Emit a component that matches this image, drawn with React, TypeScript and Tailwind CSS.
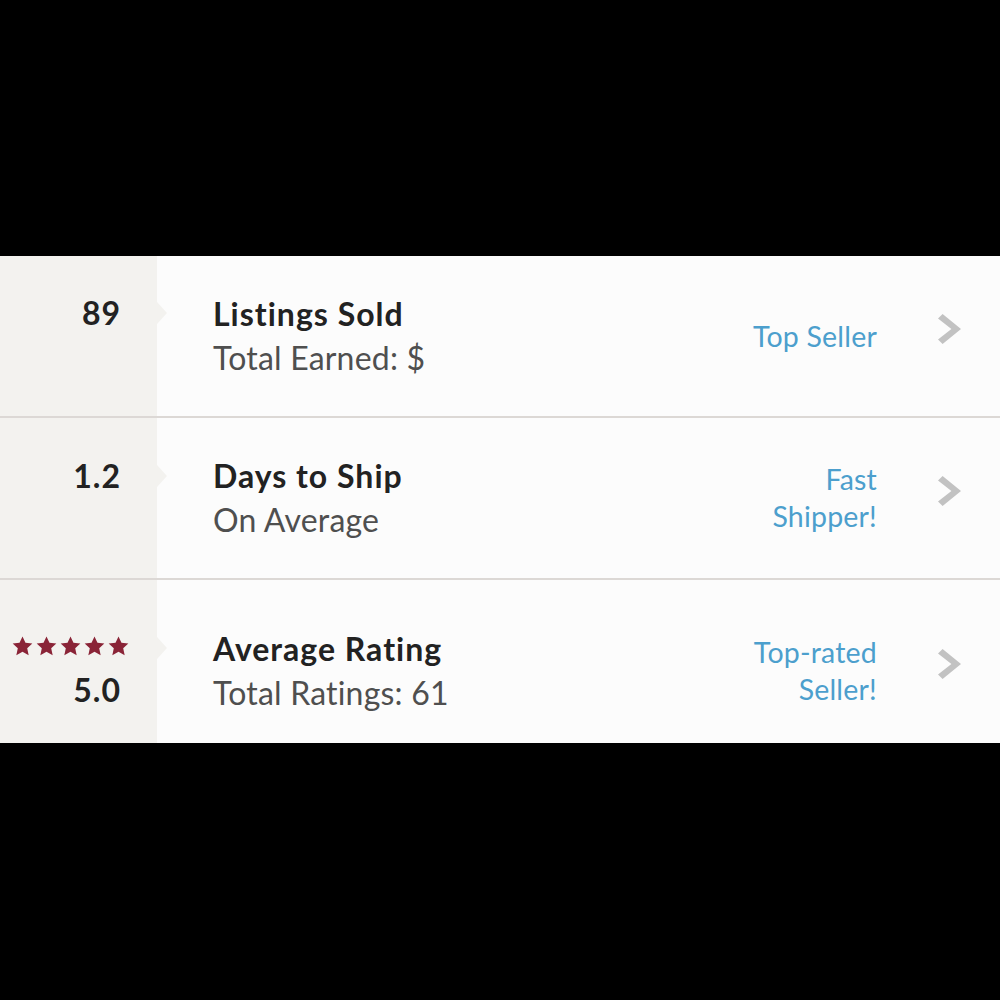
import React from "react";

const font = { fontFamily: "Lato, 'Open Sans', sans-serif" };

function Star() {
  return (
    <svg width="21" height="20" viewBox="0 0 24 23" className="block">
      <path
        d="M12 0.6l3.4 7.2 7.9 0.9-5.9 5.5 1.7 7.9L12 18.1l-7.1 4 1.7-7.9L0.7 8.7l7.9-0.9z"
        fill="#8a2437"
      />
    </svg>
  );
}

function Chevron() {
  return (
    <svg width="24" height="30" viewBox="0 0 24 30" className="block">
      <polygon points="0,4.6 4.6,0 23,15 4.6,30 0,25.4 13.4,15" fill="#c2c2c2" />
    </svg>
  );
}

function Notch({ top }: { top: string }) {
  return (
    <div
      className={`absolute left-[157px] ${top} w-0 h-0 border-y-[11px] border-y-transparent border-l-[10px] border-l-[#f3f2ef]`}
    />
  );
}

type RowProps = {
  left: React.ReactNode;
  title: string;
  subtitle: string;
  label: React.ReactNode;
  notch: React.ReactNode;
  className: string;
  contentClass: string;
};

function Row({ left, title, subtitle, label, notch, className, contentClass }: RowProps) {
  return (
    <div className={`relative flex ${className}`}>
      <div className="w-[157px] shrink-0 bg-[#f3f2ef] flex items-start justify-end pr-[37px]">
        {left}
      </div>
      {notch}
      <div className={`flex-1 flex items-center pl-[56px] pr-[38px] ${contentClass}`}>
        <div className="flex-1">
          <div className="text-[32px] leading-[44px] font-bold tracking-[1px] text-[#222222]">{title}</div>
          <div className="text-[32px] leading-[44px] tracking-[0.2px] text-[#4f4f4f]">{subtitle}</div>
        </div>
        <div className="text-right text-[28.5px] leading-[37px] tracking-[0.2px] text-[#4c9fcd]">{label}</div>
        <div className="ml-[61px] mb-[14px]">
          <Chevron />
        </div>
      </div>
    </div>
  );
}

const numClass = "text-[32px] leading-[44px] font-bold tracking-[1px] text-[#222222]";

export default function App() {
  return (
    <div className="w-[1000px] h-[1000px] bg-black flex flex-col" style={font}>
      <div className="h-[256px] shrink-0" />
      <div className="bg-[#fcfcfc] flex flex-col">
        <Row
          className="h-[162px] border-b-2 border-[#dcd8d5]"
          contentClass=""
          notch={<Notch top="top-[46px]" />}
          left={<div className={`${numClass} mt-[35px] mr-[-1px]`}>89</div>}
          title="Listings Sold"
          subtitle="Total Earned: $"
          label={<div>Top Seller</div>}
        />
        <Row
          className="h-[162px] border-b-2 border-[#dcd8d5]"
          contentClass=""
          notch={<Notch top="top-[47px]" />}
          left={<div className={`${numClass} mt-[36px] mr-[-1px]`}>1.2</div>}
          title="Days to Ship"
          subtitle="On Average"
          label={
            <>
              <div>Fast</div>
              <div>Shipper!</div>
            </>
          }
        />
        <Row
          className="h-[163px]"
          contentClass="pt-[18px]"
          notch={<Notch top="top-[57px]" />}
          left={
            <div className="flex flex-col items-end mt-[44px]">
              <div className="flex gap-[3px] mr-[-9px] h-[44px] items-center">
                <Star />
                <Star />
                <Star />
                <Star />
                <Star />
              </div>
              <div className={`${numClass} mr-[-1px]`}>5.0</div>
            </div>
          }
          title="Average Rating"
          subtitle="Total Ratings: 61"
          label={
            <>
              <div>Top-rated</div>
              <div>Seller!</div>
            </>
          }
        />
      </div>
    </div>
  );
}
